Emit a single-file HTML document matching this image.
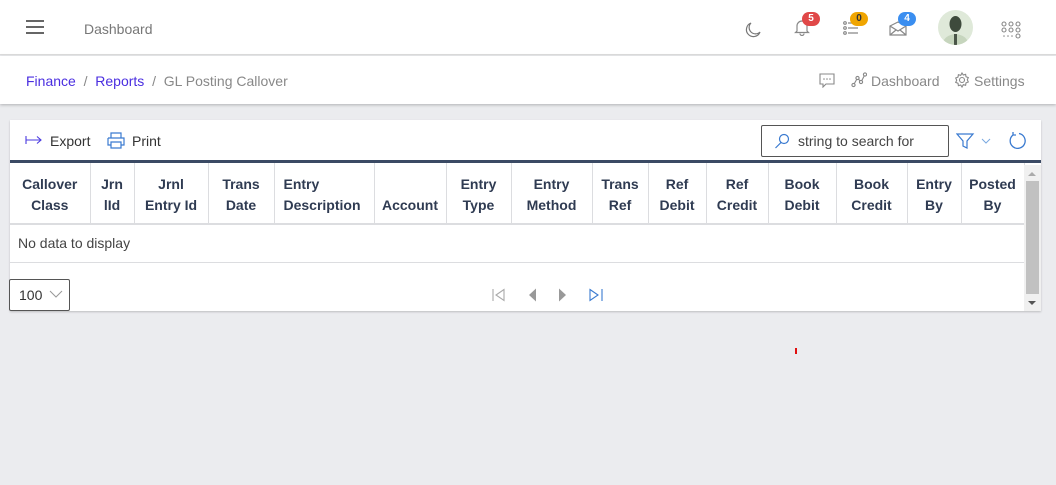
<!DOCTYPE html>
<html><head><meta charset="utf-8"><style>
*{box-sizing:border-box;margin:0;padding:0}
body{width:1056px;height:485px;background:#ebecef;font-family:"Liberation Sans",sans-serif;font-size:14px;color:#333;position:relative;overflow:hidden}
.top{position:absolute;left:0;top:0;width:1056px;height:55px;background:#fff;border-bottom:1px solid #dcdcdc}
.crumb{position:absolute;left:0;top:56px;width:1056px;height:48px;background:#fff;box-shadow:0 1px 3px rgba(0,0,0,.25)}
.abs{position:absolute}
.badge{position:absolute;height:14px;min-width:18px;border-radius:7px;color:#fff;font-size:10px;font-weight:bold;text-align:center;line-height:14px}
.card{position:absolute;left:10px;top:120px;width:1031px;height:191px;background:#fff;box-shadow:0 1px 2px rgba(0,0,0,.2)}
table{border-collapse:collapse;position:absolute;left:0;top:43px;table-layout:fixed}
th{height:61px;border-right:1px solid #dcdde0;border-bottom:2px solid #dcdde0;font-weight:bold;color:#2f3b52;font-size:14px;line-height:21px;vertical-align:bottom;padding:0 4px 7px;text-align:center}
td{height:38px;border-bottom:1px solid #dcdde0;padding-left:8px;color:#444}
</style></head><body>
<div class="top">
 <div class="abs" style="left:26px;top:20px;width:18px;height:2px;background:#666;box-shadow:0 6px 0 #666,0 12px 0 #666"></div>
 <div class="abs" style="left:84px;top:21px;color:#777;font-size:14px">Dashboard</div>
 <svg class="abs" style="left:744px;top:21px" width="18" height="18" viewBox="0 0 18 18"><path d="M7 2a7 7 0 1 0 9 9A6 6 0 0 1 7 2z" fill="none" stroke="#777" stroke-width="1.2"/></svg>
 <svg class="abs" style="left:794px;top:18px" width="16" height="18" viewBox="0 0 16 18"><path d="M3 13V8a5 5 0 0 1 10 0v5l1.5 1.5h-13zM6 15.5a2 2 0 0 0 4 0" fill="none" stroke="#888" stroke-width="1.2"/></svg>
 <div class="badge" style="left:802px;top:12px;background:#e04848">5</div>
 <svg class="abs" style="left:843px;top:20px" width="16" height="16" viewBox="0 0 16 16"><g fill="none" stroke="#888" stroke-width="1.2"><circle cx="2" cy="3" r="1.3"/><circle cx="2" cy="8" r="1.3"/><circle cx="2" cy="13" r="1.3"/><path d="M5 3h10M5 8h10M5 13h10"/></g></svg>
 <div class="badge" style="left:850px;top:12px;background:#f0a500;color:#333">0</div>
 <svg class="abs" style="left:889px;top:21px" width="18" height="15" viewBox="0 0 18 15"><path d="M1 5l8-4 8 4v9H1zM1 5l8 5 8-5M1 14l6-5M17 14l-6-5" fill="none" stroke="#888" stroke-width="1.2"/></svg>
 <div class="badge" style="left:898px;top:12px;background:#3a8ef0">4</div>
 <svg class="abs" style="left:938px;top:10px" width="35" height="35" viewBox="0 0 35 35"><defs><clipPath id="c"><circle cx="17.5" cy="17.5" r="17.5"/></clipPath></defs><g clip-path="url(#c)"><rect width="35" height="35" fill="#dfe9d9"/><path d="M4 35q2-10 13.5-11Q29 25 31 35z" fill="#c6d5bd"/><ellipse cx="17.5" cy="14" rx="6" ry="8" fill="#3e4a3c"/><rect x="16" y="24" width="3" height="11" fill="#4a5548"/></g></svg>
 <svg class="abs" style="left:1001px;top:21px" width="20" height="18" viewBox="0 0 20 18"><g fill="none" stroke="#888" stroke-width="1.1"><circle cx="3" cy="3" r="2"/><circle cx="10" cy="3" r="2"/><circle cx="17" cy="3" r="2"/><circle cx="3" cy="9" r="2"/><circle cx="10" cy="9" r="2"/><circle cx="17" cy="9" r="2"/><circle cx="17" cy="15" r="2"/></g><g fill="#888"><circle cx="3" cy="15" r=".8"/><circle cx="7" cy="15" r=".8"/><circle cx="11" cy="15" r=".8"/></g></svg>
</div>
<div class="crumb">
 <div class="abs" style="left:26px;top:17px;font-size:14px"><span style="color:#4a2ee0">Finance</span><span style="color:#888"> &nbsp;/&nbsp; </span><span style="color:#4a2ee0">Reports</span><span style="color:#888"> &nbsp;/&nbsp; GL Posting Callover</span></div>
 <svg class="abs" style="left:819px;top:17px" width="16" height="15" viewBox="0 0 16 15"><path d="M1 1h14v10H7l-3 3v-3H1z" fill="none" stroke="#888" stroke-width="1.1"/><g fill="#888"><circle cx="5" cy="6" r=".8"/><circle cx="8" cy="6" r=".8"/><circle cx="11" cy="6" r=".8"/></g></svg>
 <svg class="abs" style="left:851px;top:16px" width="16" height="16" viewBox="0 0 16 16"><g fill="none" stroke="#888" stroke-width="1.1"><circle cx="2.5" cy="13" r="1.6"/><circle cx="6.5" cy="6" r="1.6"/><circle cx="10" cy="10" r="1.6"/><circle cx="14" cy="2.5" r="1.6"/><path d="M3.3 11.6l2.4-4.2M7.6 7.2l1.3 1.6M10.8 8.6l2.4-4.7"/></g></svg>
 <div class="abs" style="left:871px;top:17px;color:#888">Dashboard</div>
 <svg class="abs" style="left:954px;top:16px" width="16" height="16" viewBox="0 0 16 16"><g fill="none" stroke="#888" stroke-width="1.1"><circle cx="8" cy="8" r="2.5"/><path d="M8 1l1.3 2 2.3-.7.4 2.4 2.3.9-1 2.2 1 2.2-2.3.9-.4 2.4-2.3-.7L8 15l-1.3-2-2.3.7-.4-2.4-2.3-.9 1-2.2-1-2.2 2.3-.9.4-2.4 2.3.7z"/></g></svg>
 <div class="abs" style="left:974px;top:17px;color:#888">Settings</div>
</div>
<div class="card">
 <svg class="abs" style="left:15px;top:15px" width="18" height="10" viewBox="0 0 18 10"><path d="M1 1v8M1 5h15M12 1.5l4 3.5-4 3.5" fill="none" stroke="#4a3ae0" stroke-width="1.1"/></svg>
 <div class="abs" style="left:40px;top:13px;color:#333">Export</div>
 <svg class="abs" style="left:97px;top:12px" width="18" height="17" viewBox="0 0 18 17"><g fill="none" stroke="#3a7ad0" stroke-width="1.2"><path d="M4 6V1h10v5M1 6h16v7h-3M4 13H1V6M4 10h10v6H4z"/></g></svg>
 <div class="abs" style="left:122px;top:13px;color:#333">Print</div>
 <div class="abs" style="left:751px;top:5px;width:188px;height:32px;border:1px solid #555;border-radius:2px"></div>
 <svg class="abs" style="left:764px;top:13px" width="16" height="16" viewBox="0 0 16 16"><g fill="none" stroke="#3a7ad0" stroke-width="1.2"><circle cx="10" cy="6" r="4.5"/><path d="M7 9.5L1.5 15"/></g></svg>
 <div class="abs" style="left:788px;top:13px;color:#444">string to search for</div>
 <svg class="abs" style="left:946px;top:12px" width="36" height="18" viewBox="0 0 36 18"><path d="M1 2h16l-6 7v7l-4-2V9z" fill="none" stroke="#3a7ad0" stroke-width="1.2"/><path d="M26 7l4 4 4-4" fill="none" stroke="#7aa8e0" stroke-width="1"/></svg>
 <svg class="abs" style="left:997px;top:11px" width="20" height="20" viewBox="0 0 20 20"><path d="M6 4a7.5 7.5 0 1 0 6-1.5M6 4V1M6 4h3" fill="none" stroke="#3a7ad0" stroke-width="1.3"/></svg>
 <div class="abs" style="left:0;top:40px;width:1031px;height:3px;background:#3b4a64"></div>
 <table style="width:1014px">
  <colgroup><col style="width:80px"><col style="width:44px"><col style="width:74px"><col style="width:66px"><col style="width:100px"><col style="width:72px"><col style="width:65px"><col style="width:81px"><col style="width:56px"><col style="width:58px"><col style="width:62px"><col style="width:68px"><col style="width:71px"><col style="width:54px"><col style="width:63px"></colgroup>
  <tr><th>Callover Class</th><th>Jrn<br>lId</th><th>Jrnl Entry Id</th><th>Trans Date</th><th style="text-align:left;padding-left:9px">Entry Description</th><th>Account</th><th>Entry Type</th><th>Entry Method</th><th>Trans Ref</th><th>Ref Debit</th><th>Ref Credit</th><th>Book Debit</th><th>Book Credit</th><th>Entry By</th><th>Posted By</th></tr>
  <tr><td colspan="15" style="border-right:1px solid #dcdde0">No data to display</td></tr>
 </table>
 <div class="abs" style="left:1014px;top:45px;width:17px;height:146px;background:#f0f0f0"></div>
 <div class="abs" style="left:1016px;top:61px;width:13px;height:113px;background:#c1c1c1"></div>
 <div class="abs" style="left:1018px;top:52px;border:4px solid transparent;border-bottom:4px solid #aaa;border-top:0"></div>
 <div class="abs" style="left:1018px;top:181px;border:4px solid transparent;border-top:4px solid #555;border-bottom:0"></div>
 <div class="abs" style="left:-1px;top:159px;width:61px;height:32px;border:1px solid #555;border-radius:2px;background:#fff"></div>
 <div class="abs" style="left:9px;top:167px;color:#333">100</div>
 <svg class="abs" style="left:39px;top:170px" width="14" height="8" viewBox="0 0 14 8"><path d="M1 1l6 6 6-6" fill="none" stroke="#999" stroke-width="1"/></svg>
 <svg class="abs" style="left:482px;top:167px" width="120" height="16" viewBox="0 0 120 16"><g fill="none" stroke="#aaa" stroke-width="1.1"><path d="M1 2v12M12 2.5L4 8l8 5.5z"/></g><path d="M44 1.5L37 8l7 6.5z" fill="#999"/><path d="M67 1.5l7 6.5-7 6.5z" fill="#999"/><g fill="none" stroke="#3a7ad0" stroke-width="1.1"><path d="M98 2.5l8 5.5-8 5.5zM110 2v12"/></g></svg>
</div>
<div class="abs" style="left:795px;top:348px;width:2px;height:6px;background:#e01010"></div>
</body></html>
